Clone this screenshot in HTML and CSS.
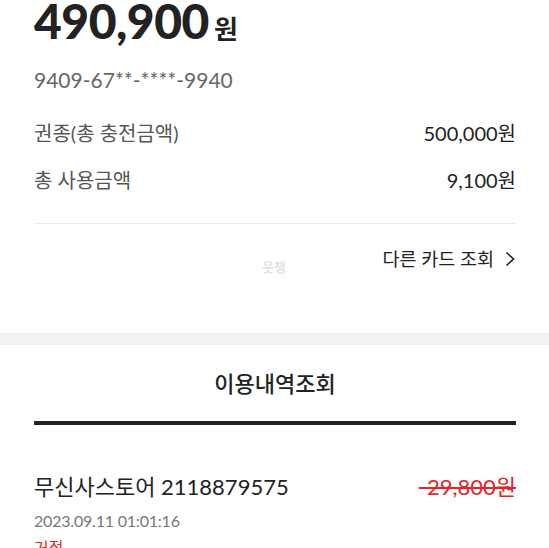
FILE: index.html
```html
<!DOCTYPE html>
<html lang="ko">
<head>
<meta charset="utf-8">
<link rel="stylesheet" href="styles.css">
</head>
<body>
<div class="page">
  <section class="card">
    <div class="balance"><span class="amount">490,900</span><span class="won">원</span></div>
    <div class="cardno">9409-67**-****-9940</div>
    <div class="row row1"><span class="label">권종(총 충전금액)</span><span class="value">500,000원</span></div>
    <div class="row row2"><span class="label">총 사용금액</span><span class="value">9,100원</span></div>
    <div class="divider"></div>
    <div class="other">
      <span class="wm">웃챙</span>
      <span class="link">다른 카드 조회
        <svg class="chev" width="12" height="16" viewBox="0 0 12 16"><path d="M2.5 1.5 L9.5 8 L2.5 14.5" fill="none" stroke="#222" stroke-width="1.6"/></svg>
      </span>
    </div>
  </section>
  <div class="band"></div>
  <section class="history">
    <h2 class="title">이용내역조회</h2>
    <div class="thick"></div>
    <div class="item">
      <div class="item-top"><span class="store">무신사스토어 2118879575</span><span class="price">-29,800원</span></div>
      <div class="date">2023.09.11 01:01:16</div>
      <div class="status">거절</div>
    </div>
  </section>
</div>
</body>
</html>
```
FILE: styles.css
```css
* { box-sizing: border-box; }
html, body { margin: 0; padding: 0; background: #fff; }
body { font-family: Lato, "Noto Sans CJK KR", sans-serif; color: #222; overflow: hidden; }
.page { width: 549px; height: 548px; overflow: hidden; }
.card { padding: 0 33px 0 34px; }
.balance { display: flex; align-items: baseline; height: 48px; margin-top: -3px; }
.amount { font-size: 48px; font-weight: 900; letter-spacing: -0.5px; color: #222; line-height: 48px; }
.won { font-family: "Noto Sans CJK KR", sans-serif; font-size: 26px; font-weight: 700; margin-left: 5px; }
.cardno { font-size: 21px; color: #666; margin-top: 22px; line-height: 26px; }
.row { display: flex; justify-content: space-between; align-items: center; font-size: 20px; line-height: 26px; }
.row1 { margin-top: 27px; }
.row2 { margin-top: 21px; }
.label { color: #555; }
.value { color: #222; }
.divider { height: 1px; background: #ebebeb; margin-top: 30px; }
.other { position: relative; display: flex; justify-content: flex-end; align-items: flex-start; height: 109px; padding-top: 22px; }
.link { font-size: 18.5px; line-height: 26px; color: #222; display: flex; align-items: center; gap: 10px; }
.wm { position: absolute; left: 228px; top: 35px; font-family: "Noto Sans CJK KR", sans-serif; font-size: 13px; line-height: 16px; font-weight: 700; color: #e2e2ea; }
.chev { display: block; }
.band { height: 12px; background: #f2f2f2; }
.history { padding: 0 33px 0 34px; }
.title { margin: 0; text-align: center; font-family: "Noto Sans CJK KR", sans-serif; font-size: 22px; font-weight: 500; line-height: 30px; padding-top: 22px; color: #222; }
.thick { height: 4px; background: #222; margin-top: 24px; }
.item { padding-top: 48px; }
.item-top { display: flex; justify-content: space-between; align-items: center; font-size: 22px; line-height: 28px; }
.store { color: #222; }
.price { color: #e3262a; text-decoration: line-through; }
.date { font-size: 16px; letter-spacing: -0.2px; color: #777; margin-top: 8px; line-height: 24px; }
.status { font-size: 16px; color: #e3262a; margin-top: 4px; line-height: 22px; }
```
